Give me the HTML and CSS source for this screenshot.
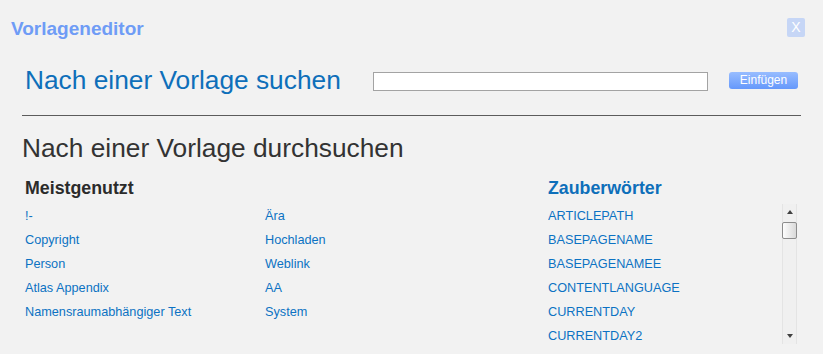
FILE: index.html
```html
<!DOCTYPE html>
<html>

<head>
  <meta charset="utf-8">
  <meta name="viewport" content="width=device-width">
  <title>Vorlageneditor</title>

  <link rel="stylesheet" href="styles.css">
</head>

<body>
  <nav class="titlebar">
    <span class="title">Vorlageneditor</span>
    <button class="close">X</button>
  </nav>

  <section class="search">
    <h1>Nach einer Vorlage suchen</h1>
    <input type="text" class="searchbox">
    <button class="insert">Einfügen</button>
  </section>

  <hr>

  <main>
    <h2>Nach einer Vorlage durchsuchen</h2>

    <div class="columns">
      <div class="block common">
        <h3>Meistgenutzt</h3>
        <ul class="grid">
          <li><a href="#">!-</a></li>
          <li><a href="#">Ära</a></li>
          <li><a href="#">Copyright</a></li>
          <li><a href="#">Hochladen</a></li>
          <li><a href="#">Person</a></li>
          <li><a href="#">Weblink</a></li>
          <li><a href="#">Atlas Appendix</a></li>
          <li><a href="#">AA</a></li>
          <li><a href="#">Namensraumabhängiger Text</a></li>
          <li><a href="#">System</a></li>
        </ul>
      </div>

      <div class="block magic">
        <h3>Zauberwörter</h3>
        <div class="listbox">
          <ul class="words">
            <li><a href="#">ARTICLEPATH</a></li>
            <li><a href="#">BASEPAGENAME</a></li>
            <li><a href="#">BASEPAGENAMEE</a></li>
            <li><a href="#">CONTENTLANGUAGE</a></li>
            <li><a href="#">CURRENTDAY</a></li>
            <li><a href="#">CURRENTDAY2</a></li>
          </ul>
          <div class="scrollbar">
            <span class="arrow up"></span>
            <span class="thumb"></span>
            <span class="fill"></span>
            <span class="arrow down"></span>
          </div>
        </div>
      </div>
    </div>
  </main>
</body>

</html>
```

FILE: styles.css
```css
* {
  box-sizing: border-box;
}

body {
  margin: 0;
  padding: 0;
  background-color: #f2f2f2;
  font-family: "Liberation Sans", Arial, sans-serif;
  width: 823px;
  height: 354px;
  overflow: hidden;
}

.titlebar {
  display: flex;
  justify-content: space-between;
  align-items: flex-start;
  padding: 18px 18px 0 11px;
  height: 65px;
}

.title {
  margin-top: 1px;
  font-size: 19px;
  line-height: 20px;
  font-weight: bold;
  color: #6f9cf6;
}

.close {
  width: 18px;
  height: 19px;
  padding: 0;
  border: none;
  border-radius: 2px;
  background-color: #c6d6f6;
  color: white;
  font-family: "Liberation Sans", Arial, sans-serif;
  font-size: 14px;
  line-height: 19px;
}

.search {
  display: flex;
  align-items: center;
  gap: 21px;
  padding: 0 25px;
  height: 30px;
}

.search h1 {
  flex: 1;
  margin: 0;
  font-size: 26.3px;
  line-height: 30px;
  font-weight: normal;
  color: #0e6fba;
}

.searchbox {
  width: 335px;
  height: 19px;
  margin-top: 3px;
  border: 1px solid #a3a3a3;
  background-color: white;
  padding: 0;
}

.insert {
  width: 69px;
  height: 17px;
  padding: 0;
  border: none;
  border-radius: 3px;
  background: linear-gradient(#98bdff, #6598fb);
  color: white;
  font-family: "Liberation Sans", Arial, sans-serif;
  font-size: 12px;
  line-height: 17px;
}

hr {
  margin: 20px 22px 0 22px;
  border: none;
  border-top: 1px solid #5c5c5c;
  height: 0;
}

main {
  padding: 0 26px 0 22px;
}

h2 {
  margin: 17px 0 0 0;
  font-size: 26.3px;
  line-height: 30px;
  font-weight: normal;
  color: #333;
}

.columns {
  display: flex;
  margin-top: 14px;
}

h3 {
  margin: 0;
  font-size: 17.8px;
  line-height: 22px;
  font-weight: bold;
  color: #2b2b2b;
}

.block {
  display: flex;
  flex-direction: column;
  gap: 5px;
}

.common {
  width: 526px;
  padding-left: 3px;
}

.magic {
  flex: 1;
}

.magic h3 {
  color: #0e6fba;
}

ul {
  list-style: none;
  margin: 0;
  padding: 0;
}

li {
  font-size: 12.7px;
  line-height: 24px;
  white-space: nowrap;
}

a {
  color: #0c72c3;
  text-decoration: none;
}

.grid {
  display: grid;
  grid-template-columns: 240px 240px;
}

.listbox {
  display: flex;
  height: 140px;
}

.words {
  flex: 1;
  overflow: hidden;
}

.scrollbar {
  width: 15px;
  display: flex;
  flex-direction: column;
  align-items: center;
  background-color: #f0f0f0;
  border-left: 1px solid #e4e4e4;
  border-right: 1px solid #e4e4e4;
}

.arrow {
  width: 0;
  height: 0;
  border-left: 3.5px solid transparent;
  border-right: 3.5px solid transparent;
}

.up {
  margin-top: 6px;
  border-bottom: 4px solid #404040;
}

.down {
  margin-bottom: 6px;
  border-top: 4px solid #404040;
}

.thumb {
  width: 15px;
  height: 17px;
  margin-top: 8px;
  border: 1px solid #8c8c8c;
  border-radius: 2px;
  background: linear-gradient(to right, #fdfdfd, #d9d9d9);
}

.fill {
  flex: 1;
}
```
